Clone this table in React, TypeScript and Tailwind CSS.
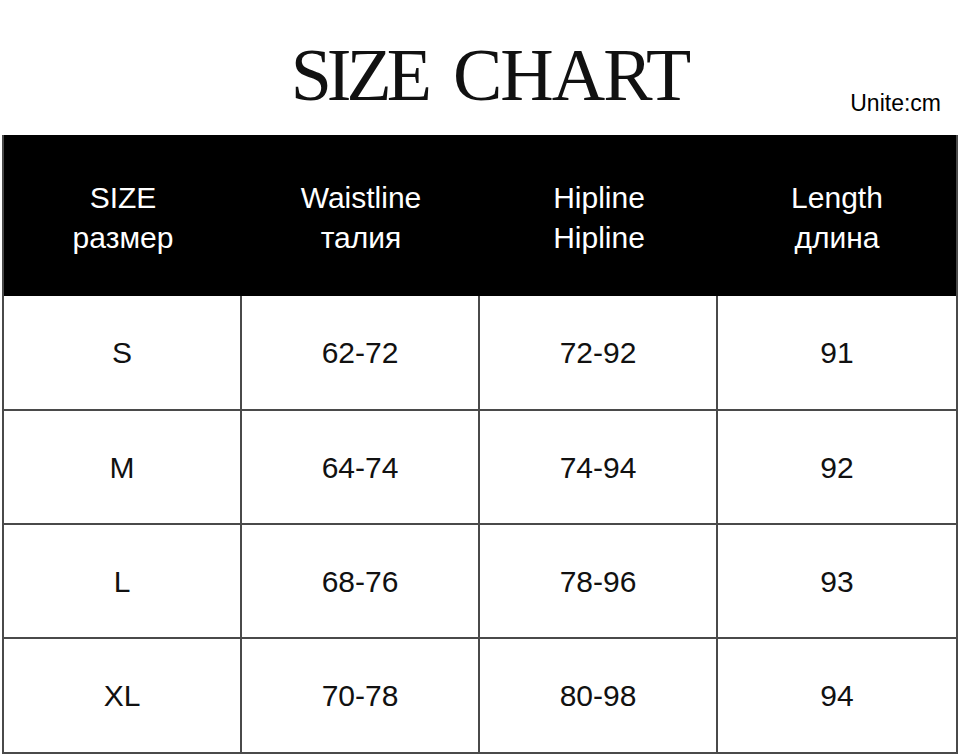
const header = [
  ["SIZE", "размер"],
  ["Waistline", "талия"],
  ["Hipline", "Hipline"],
  ["Length", "длина"],
];

const rows = [
  ["S", "62-72", "72-92", "91"],
  ["M", "64-74", "74-94", "92"],
  ["L", "68-76", "78-96", "93"],
  ["XL", "70-78", "80-98", "94"],
];

export default function App() {
  return (
    <div className="w-[960px] h-[755px] bg-white overflow-hidden font-['Liberation_Sans',Arial,sans-serif]">
      {/* Title */}
      <div className="grid grid-cols-[1fr_auto_1fr] h-[135px]">
        <div />
        <h1 className="mt-[38px] pl-[20px] text-[74px] leading-none text-[#111] font-normal font-['Liberation_Serif','Times_New_Roman',serif]">
          <span className="tracking-[-5px]">SIZE</span>
          <span className="ml-[26px] tracking-[-2px]">CHART</span>
        </h1>
        <div className="flex justify-end items-start pr-[19px]">
          <span className="mt-[92px] text-[23px] leading-none text-black">Unite:cm</span>
        </div>
      </div>

      {/* Table */}
      <div className="mx-[2px] border-x-2 border-[#4a4a4a]">
        <div className="grid grid-cols-4 h-[161px] bg-black">
          {header.map(([en, ru], i) => (
            <div key={i} className="flex flex-col items-center justify-center pt-[4px] text-white text-[30px] leading-[40px]">
              <span>{en}</span>
              <span>{ru}</span>
            </div>
          ))}
        </div>
        {rows.map((row, r) => (
          <div
            key={r}
            className={`grid grid-cols-4 border-b-2 border-[#4a4a4a] ${r === 0 || r === 3 ? "h-[115px]" : "h-[114px]"}`}
          >
            {row.map((cell, c) => (
              <div
                key={c}
                className={`flex items-center justify-center text-[30px] text-[#111] ${
                  c < 3 ? "border-r-2 border-[#4a4a4a]" : ""
                }`}
              >
                {cell}
              </div>
            ))}
          </div>
        ))}
      </div>
    </div>
  );
}
